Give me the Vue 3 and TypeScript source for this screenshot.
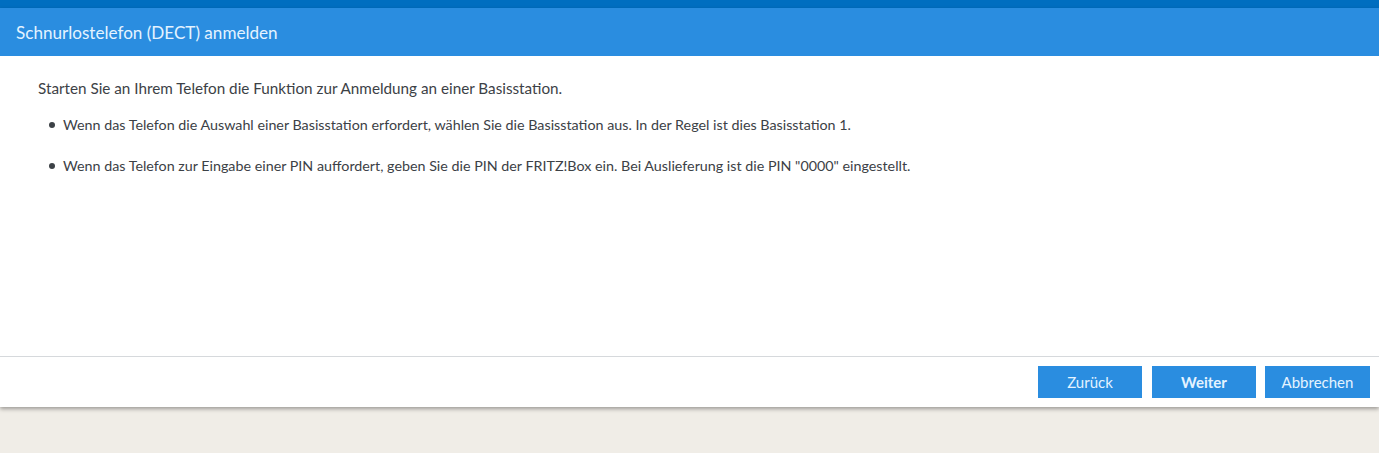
<template>
  <div class="page">
    <div class="top-strip"></div>
    <div class="dialog">
      <h1 class="title">{{ title }}</h1>
      <div class="content">
        <p class="intro">{{ intro }}</p>
        <ul class="hints">
          <li v-for="hint in hints" :key="hint">{{ hint }}</li>
        </ul>
      </div>
      <div class="actions">
        <button
          v-for="action in actions"
          :key="action.label"
          :class="{ primary: action.primary }"
        >
          {{ action.label }}
        </button>
      </div>
    </div>
  </div>
</template>

<script setup lang="ts">
const title = 'Schnurlostelefon (DECT) anmelden';
const intro = 'Starten Sie an Ihrem Telefon die Funktion zur Anmeldung an einer Basisstation.';

const hints = [
  'Wenn das Telefon die Auswahl einer Basisstation erfordert, wählen Sie die Basisstation aus. In der Regel ist dies Basisstation 1.',
  'Wenn das Telefon zur Eingabe einer PIN auffordert, geben Sie die PIN der FRITZ!Box ein. Bei Auslieferung ist die PIN "0000" eingestellt.',
];

const actions = [
  { label: 'Zurück', primary: false },
  { label: 'Weiter', primary: true },
  { label: 'Abbrechen', primary: false },
];
</script>

<style>
html,
body {
  margin: 0;
  background: #f0ede7;
  overflow: hidden;
}
</style>

<style scoped>
.page {
  height: 453px;
  font-family: "Lato", "Noto Sans", sans-serif;
  color: #3c4146;
}

.top-strip {
  height: 8px;
  background: #006ec0;
}

.dialog {
  height: 399px;
  display: flex;
  flex-direction: column;
  background: #fff;
  box-shadow: 0 2px 4px rgba(0, 0, 0, 0.35);
}

.title {
  margin: 0;
  height: 48px;
  padding-left: 16px;
  font-size: 17.1px;
  font-weight: 400;
  line-height: 50px;
  color: #e4f3ff;
  background: #2a8de0;
}

.content {
  flex: 1;
  padding: 22px 38px 0;
}

.intro {
  margin: 0 0 16px;
  font-size: 15.25px;
  line-height: 21px;
}

.hints {
  margin: 0;
  padding: 0 0 0 11px;
  list-style: none;
  font-size: 14.3px;
  line-height: 20px;
}

.hints li {
  display: flex;
  align-items: center;
  gap: 8px;
  margin-bottom: 21px;
}

.hints li::before {
  content: "";
  flex: none;
  width: 6px;
  height: 6px;
  border-radius: 50%;
  background: #3c4146;
}

.actions {
  height: 51px;
  display: flex;
  justify-content: flex-end;
  align-items: flex-start;
  gap: 9px;
  padding: 9px 9px 0 0;
  box-sizing: border-box;
  border-top: 1px solid #d6d9dc;
}

button {
  width: 104px;
  height: 32px;
  padding: 0;
  border: none;
  font-family: inherit;
  font-size: 15px;
  color: #e4f3ff;
  background: #2a8de0;
  cursor: pointer;
}

button:first-child {
  margin-right: 1px;
}

button:last-child {
  width: 105px;
}

button.primary {
  font-weight: 700;
}
</style>
